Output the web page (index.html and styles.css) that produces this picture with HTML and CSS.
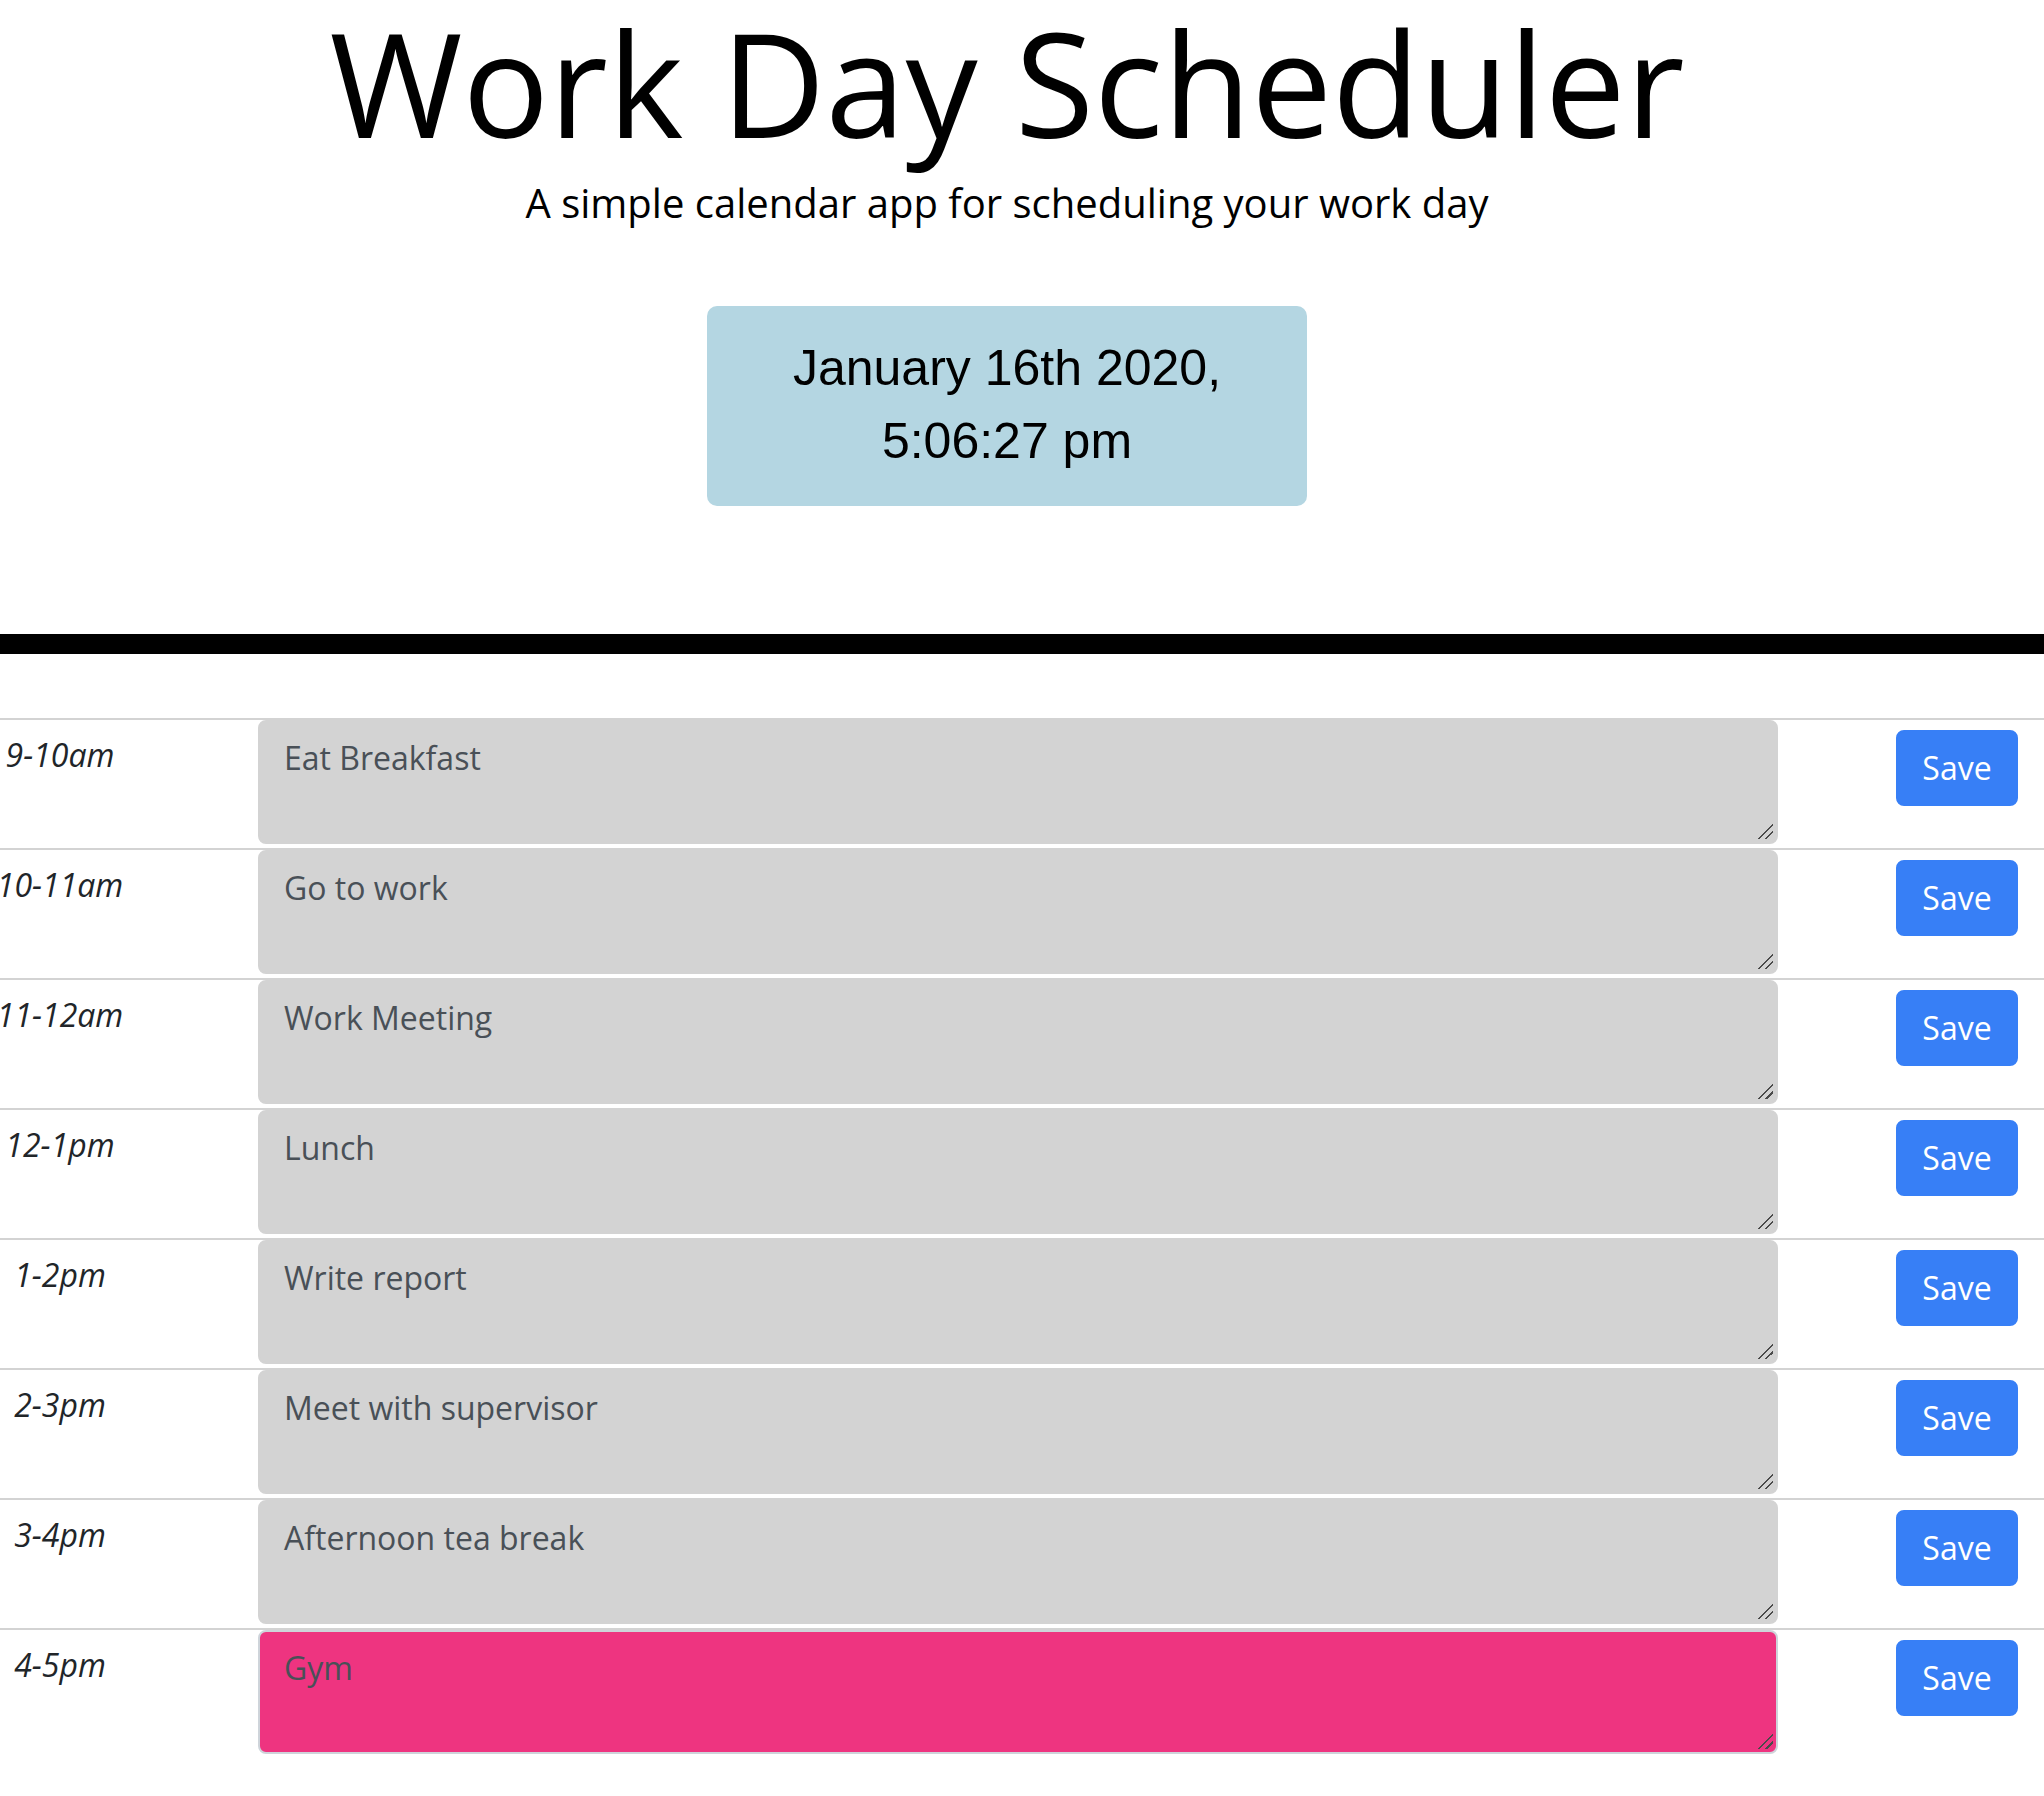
FILE: index.html
```html
<!DOCTYPE html>
<html lang="en">
<head>
<meta charset="utf-8">
<title>Work Day Scheduler</title>
<link rel="stylesheet" href="styles.css">
</head>
<body>
<header class="jumbotron">
  <div class="jumbo-inner">
    <h1 class="title">Work Day Scheduler</h1>
    <p class="lead">A simple calendar app for scheduling your work day</p>
    <div class="current-day">January 16th 2020,<br>5:06:27 pm</div>
  </div>
</header>
<main class="container">
  <div class="row">
    <div class="hour"><span>9-10am</span></div>
    <textarea class="description past">Eat Breakfast</textarea>
    <button class="saveBtn">Save</button>
  </div>
  <div class="row">
    <div class="hour"><span>10-11am</span></div>
    <textarea class="description past">Go to work</textarea>
    <button class="saveBtn">Save</button>
  </div>
  <div class="row">
    <div class="hour"><span>11-12am</span></div>
    <textarea class="description past">Work Meeting</textarea>
    <button class="saveBtn">Save</button>
  </div>
  <div class="row">
    <div class="hour"><span>12-1pm</span></div>
    <textarea class="description past">Lunch</textarea>
    <button class="saveBtn">Save</button>
  </div>
  <div class="row">
    <div class="hour"><span>1-2pm</span></div>
    <textarea class="description past">Write report</textarea>
    <button class="saveBtn">Save</button>
  </div>
  <div class="row">
    <div class="hour"><span>2-3pm</span></div>
    <textarea class="description past">Meet with supervisor</textarea>
    <button class="saveBtn">Save</button>
  </div>
  <div class="row">
    <div class="hour"><span>3-4pm</span></div>
    <textarea class="description past">Afternoon tea break</textarea>
    <button class="saveBtn">Save</button>
  </div>
  <div class="row">
    <div class="hour"><span>4-5pm</span></div>
    <textarea class="description present">Gym</textarea>
    <button class="saveBtn">Save</button>
  </div>
</main>
</body>
</html>
```
FILE: styles.css
```css
html, body {
  margin: 0;
  padding: 0;
  background: #ffffff;
  overflow: hidden;
}

body {
  font-family: "Open Sans", "Liberation Sans", sans-serif;
  color: #212529;
}

.jumbotron {
  border-bottom: 20px solid #000000;
  padding-bottom: 128px;
}

.jumbo-inner {
  width: 2014px;
  display: flex;
  flex-direction: column;
  align-items: center;
}

.title {
  margin: -13px 0 0 0;
  font-size: 144px;
  font-weight: 400;
  line-height: 190px;
  color: #000000;
  white-space: nowrap;
}

.lead {
  margin: 0;
  font-size: 40px;
  line-height: 52px;
  color: #000000;
  white-space: nowrap;
}

.current-day {
  margin-top: 77px;
  width: 600px;
  box-sizing: border-box;
  padding: 26px 0 28px;
  background: #b4d6e2;
  border-radius: 10px;
  text-align: center;
  font-family: "Liberation Sans", Arial, sans-serif;
  font-size: 50px;
  line-height: 73px;
  color: #000000;
}

.container {
  margin-top: 64px;
}

.row {
  display: flex;
  align-items: flex-start;
  border-top: 2px solid #d3d3d3;
  height: 128px;
}

.hour {
  width: 120px;
  flex: none;
  display: flex;
  justify-content: center;
  padding-top: 11px;
  margin-right: 138px;
  font-style: italic;
  font-size: 32px;
  line-height: 48px;
  color: #212529;
  white-space: nowrap;
}

.description {
  flex: none;
  width: 1520px;
  height: 124px;
  box-sizing: border-box;
  margin: 0;
  padding: 12px 24px;
  border: 2px solid #ced4da;
  border-radius: 8px;
  font-family: "Open Sans", "Liberation Sans", sans-serif;
  font-size: 32px;
  line-height: 48px;
  color: #495057;
  outline: none;
  resize: none;
  background-repeat: no-repeat;
  background-size: 15px 15px;
  background-position: right 3px bottom 3px;
  background-image: linear-gradient(135deg, transparent 0 47%, #4a4a4a 47% 55%, transparent 55% 72%, #4a4a4a 72% 80%, transparent 80%);
}

.past {
  background-color: #d3d3d3;
  border-color: #d3d3d3;
}

.present {
  background-color: #ee3480;
  border-color: #ced4da;
}

.saveBtn {
  flex: none;
  margin: 10px 0 0 118px;
  width: 122px;
  height: 76px;
  box-sizing: border-box;
  padding: 12px 0;
  border: 2px solid #377ff6;
  border-radius: 8px;
  background: #377ff6;
  color: #ffffff;
  font-family: "Open Sans", "Liberation Sans", sans-serif;
  font-size: 32px;
  line-height: 48px;
  cursor: pointer;
}
```
